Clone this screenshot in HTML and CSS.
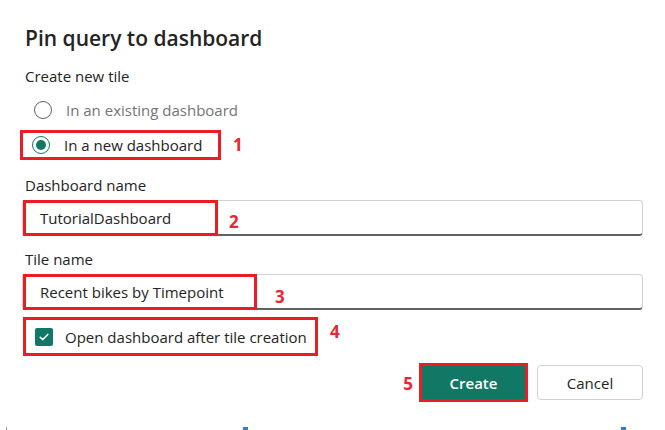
FILE: index.html
```html
<!DOCTYPE html>
<html lang="en">
<head>
<meta charset="utf-8">
<title>Pin query to dashboard</title>
<link rel="stylesheet" href="styles.css">
</head>
<body>
<div class="dialog">
  <h1 class="title">Pin query to dashboard</h1>
  <div class="section-label">Create new tile</div>
  <div class="radio-row disabled"><span class="radio"></span><span>In an existing dashboard</span></div>
  <div class="annot-row">
    <div class="mark mark-radio">
      <div class="radio-row"><span class="radio checked"></span><span>In a new dashboard</span></div>
    </div>
    <span class="num num1">1</span>
  </div>
  <div class="field-label first">Dashboard name</div>
  <div class="field">
    <span class="field-text">TutorialDashboard</span>
    <span class="overlay ov2"></span>
    <span class="num num2">2</span>
  </div>
  <div class="field-label">Tile name</div>
  <div class="field">
    <span class="field-text">Recent bikes by Timepoint</span>
    <span class="overlay ov3"></span>
    <span class="num num3">3</span>
  </div>
  <div class="annot-row">
    <div class="mark mark-check">
      <span class="checkbox"><svg width="10" height="8" viewBox="0 0 10 8"><path d="M1.2 4.2 L3.8 6.6 L8.8 1.4" fill="none" stroke="#fff" stroke-width="1.5" stroke-linecap="round" stroke-linejoin="round"/></svg></span>
      <span>Open dashboard after tile creation</span>
    </div>
    <span class="num num4">4</span>
  </div>
  <div class="actions">
    <span class="num num5">5</span>
    <div class="mark mark-btn"><button class="btn primary">Create</button></div>
    <button class="btn secondary">Cancel</button>
  </div>
</div>
<div class="edge">
  <span class="tick gray"></span>
  <span class="tick blue t2"></span>
  <span class="tick blue t3"></span>
</div>
</body>
</html>
```
FILE: styles.css
```css
* { box-sizing: border-box; }
html, body { margin: 0; padding: 0; background: #fff; }
body {
  width: 665px;
  height: 430px;
  overflow: hidden;
  position: relative;
  font-family: "Open Sans", "Noto Sans", sans-serif;
  color: #242424;
  font-size: 15px;
}
.dialog {
  display: flex;
  flex-direction: column;
  padding: 0 22px 0 22px;
}
.title {
  margin: 24px 0 0 3px;
  font-size: 21px;
  font-weight: 600;
  line-height: 28px;
  color: #242424;
}
.section-label {
  margin: 14px 0 0 3px;
  line-height: 20px;
}
.radio-row {
  display: flex;
  align-items: center;
  gap: 14px;
  height: 20px;
  line-height: 20px;
}
.disabled { margin: 14px 0 0 12px; color: #757575; }
.radio {
  width: 18px;
  height: 18px;
  border-radius: 50%;
  border: 1px solid #616161;
  flex: none;
  position: relative;
}
.radio.checked { border-color: #117865; }
.radio.checked::after {
  content: "";
  position: absolute;
  left: 3px; top: 3px;
  width: 10px; height: 10px;
  border-radius: 50%;
  background: #117865;
}
.annot-row {
  display: flex;
  align-items: center;
}
.mark {
  border: 3px solid #ec1c24;
}
.mark-radio {
  margin-top: 10px;
  width: 201px;
  height: 30px;
  margin-left: -2px;
  padding: 2px 0 0 9px;
}
.num {
  color: #ec2530;
  font-weight: 700;
  font-size: 17px;
  line-height: 20px;
  font-family: "Open Sans", sans-serif;
}
.num1 { margin: 10px 0 0 12px; }
.field-label {
  margin: 13px 0 0 3px;
  line-height: 20px;
}
.field-label.first { margin-top: 15px; }
.field {
  margin-top: 5px;
  position: relative;
  height: 36px;
  border: 1px solid #d1d1d1;
  border-bottom: 2px solid #616161;
  border-radius: 4px;
  display: flex;
  align-items: center;
  padding-left: 17px;
}
.field-text { line-height: 20px; color: #242424; }
.overlay {
  position: absolute;
  left: 0; top: -1px;
  height: 36px;
  border: 3px solid #ec1c24;
}
.ov2 { width: 195px; }
.ov3 { width: 234px; }
.num2 { position: absolute; left: 206px; top: 11px; }
.num3 { position: absolute; left: 252px; top: 12px; }
.mark-check {
  margin: 7px 0 0 1px;
  width: 295px;
  height: 39px;
  display: flex;
  align-items: center;
  gap: 12px;
  padding-left: 9px;
}
.checkbox {
  width: 18px; height: 18px;
  border-radius: 2px;
  background: #117865;
  display: flex; align-items: center; justify-content: center;
  flex: none;
}
.num4 { margin: -2px 0 0 12px; }
.actions {
  display: flex;
  justify-content: flex-end;
  align-items: center;
  margin-top: 7px;
}
.num5 { margin: 2px 6px 0 0; }
.mark-btn { width: 109px; height: 39px; display: flex; }
.btn {
  font-family: "Open Sans", sans-serif;
  font-size: 15px;
  cursor: pointer;
}
.primary {
  flex: 1;
  border: none;
  background: #117865;
  color: #fff;
  font-weight: 600;
}
.secondary {
  margin-left: 9px;
  width: 106px;
  height: 35px;
  background: #fff;
  border: 1px solid #d1d1d1;
  border-radius: 4px;
  color: #242424;
}
.edge {
  position: absolute;
  left: 0; bottom: 0;
  width: 665px;
  height: 3px;
}
.tick { position: absolute; bottom: 0; height: 3px; }
.gray { left: 6px; width: 1px; background: #999; }
.blue { width: 5px; background: #2f80c8; }
.t2 { left: 243px; }
.t3 { left: 621px; }
```
